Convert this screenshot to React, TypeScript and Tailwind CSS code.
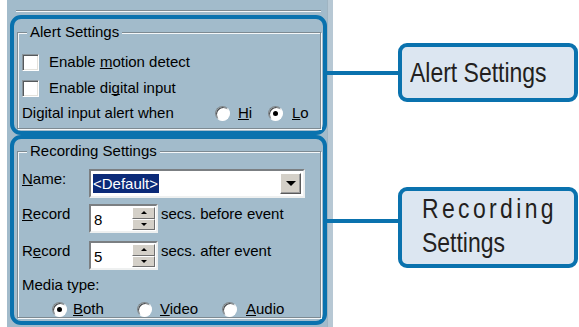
import React from 'react';

const ui = { fontFamily: '"Liberation Sans", Arial, sans-serif' };

function CheckBox() {
  return (
    <span className="w-[17px] h-[17px] bg-white border border-t-[#8a949a] border-l-[#8a949a] border-r-white border-b-white shadow-[inset_1px_1px_0_#55595c,inset_-1px_-1px_0_#e4e2dc] shrink-0" />
  );
}

function Radio({ on }: { on?: boolean }) {
  return (
    <span className="relative w-[15px] h-[15px] rounded-full bg-white border border-t-[#7c8489] border-l-[#7c8489] border-r-white border-b-white shadow-[inset_1px_1px_0_#4a4d50] shrink-0 flex items-center justify-center">
      {on && <span className="w-[5px] h-[5px] rounded-full bg-black" />}
    </span>
  );
}

function K({ children }: { children: React.ReactNode }) {
  return <u className="[text-decoration-skip-ink:none]">{children}</u>;
}

function GroupBox({ title, className, children }: { title: string; className: string; children: React.ReactNode }) {
  return (
    <div className={`relative border border-[#7d8a92] shadow-[inset_1px_1px_0_#f4f7f9,1px_1px_0_#f4f7f9] ${className}`}>
      <span className="absolute -top-[10px] left-[9px] px-[3px] bg-[#a2bbcb] leading-[17px]">{title}</span>
      {children}
    </div>
  );
}

function Spin({ value }: { value: string }) {
  return (
    <div className="flex w-[69px] h-[29px] bg-white border-2 border-t-[#7b7f82] border-l-[#7b7f82] border-r-[#eef0f0] border-b-[#eef0f0]">
      <span className="flex-1 pl-[3px] pt-[4px] leading-[19px]">{value}</span>
      <div className="flex flex-col w-[23px] my-[1px] mr-[1px]">
        <span className="flex-1 bg-[#d4d0c8] border border-t-white border-l-white border-r-[#6f6f6f] border-b-[#6f6f6f] flex items-center justify-center">
          <span className="w-0 h-0 border-x-[3px] border-x-transparent border-b-[3px] border-b-black" />
        </span>
        <span className="flex-1 bg-[#d4d0c8] border border-t-white border-l-white border-r-[#6f6f6f] border-b-[#6f6f6f] flex items-center justify-center">
          <span className="w-0 h-0 border-x-[3px] border-x-transparent border-t-[3px] border-t-black" />
        </span>
      </div>
    </div>
  );
}

export default function App() {
  return (
    <div className="w-[579px] h-[327px] bg-white flex overflow-hidden text-[15px] text-black" style={ui}>
      <div className="ml-[7px] flex h-full">
        <div className="w-[320px] h-full bg-[#a2bbcb] flex flex-col">
          <div className="ml-[9px] w-[305px] h-[11px] border-b border-[#7d8a92] shadow-[0_1px_0_#f4f7f9]" />

          <div className="mt-[4px] ml-[3px] w-[317px] h-[120px] border-4 border-[#0a72ae] rounded-[11px]">
            <GroupBox title="Alert Settings" className="mt-[13px] ml-[3px] w-[304px] h-[97px]">
              <div className="flex flex-col pl-[4px] pt-[16px]">
                <div className="h-[26px] flex items-center gap-[10px]">
                  <CheckBox />
                  <span>Enable <K>m</K>otion detect</span>
                </div>
                <div className="h-[26px] flex items-center gap-[10px]">
                  <CheckBox />
                  <span>Enable di<K>g</K>ital input</span>
                </div>
                <div className="h-[24px] flex items-center">
                  <span className="w-[193px]">Digital input alert when</span>
                  <Radio />
                  <span className="ml-[8px] w-[30px]"><K>H</K>i</span>
                  <Radio on />
                  <span className="ml-[9px]"><K>L</K>o</span>
                </div>
              </div>
            </GroupBox>
          </div>

          <div className="ml-[3px] w-[317px] h-[190px] border-4 border-[#0a72ae] rounded-[11px]">
            <GroupBox title="Recording Settings" className="mt-[12px] ml-[3px] w-[304px] h-[167px]">
              <div className="flex flex-col pl-[4px] pt-[17px]">
                <div className="h-[29px] flex items-center">
                  <span className="w-[67px] -mt-[9px]"><K>N</K>ame:</span>
                  <div className="flex items-center w-[216px] h-[29px] bg-white border-2 border-t-[#7b7f82] border-l-[#7b7f82] border-r-[#eef0f0] border-b-[#eef0f0] pl-[2px] pr-[2px]">
                    <span className="bg-[#0b2a78] text-white h-[19px] leading-[19px] pr-[1px]">&lt;Default&gt;</span>
                    <span className="ml-auto w-[21px] h-[21px] bg-[#d4d0c8] border border-t-white border-l-white border-r-[#5a5a5a] border-b-[#5a5a5a] shadow-[inset_-1px_-1px_0_#9a9a9a] flex items-center justify-center">
                      <span className="w-0 h-0 border-x-[5px] border-x-transparent border-t-[5px] border-t-black" />
                    </span>
                  </div>
                </div>
                <div className="mt-[6px] h-[29px] flex items-center">
                  <span className="w-[67px] -mt-[8px]"><K>R</K>ecord</span>
                  <Spin value="8" />
                  <span className="ml-[3px] -mt-[9px]">secs. before event</span>
                </div>
                <div className="mt-[8px] h-[29px] flex items-center">
                  <span className="w-[67px] -mt-[9px]">R<K>e</K>cord</span>
                  <Spin value="5" />
                  <span className="ml-[3px] -mt-[9px]">secs. after event</span>
                </div>
                <div className="mt-[6px] h-[18px] flex items-center">Media type:</div>
                <div className="mt-[7px] h-[16px] flex items-center pl-[30px]">
                  <div className="w-[85px] flex items-center gap-[6px]">
                    <Radio on />
                    <span><K>B</K>oth</span>
                  </div>
                  <div className="w-[85px] flex items-center gap-[8px]">
                    <Radio />
                    <span><K>V</K>ideo</span>
                  </div>
                  <div className="flex items-center gap-[9px]">
                    <Radio />
                    <span><K>A</K>udio</span>
                  </div>
                </div>
              </div>
            </GroupBox>
          </div>
        </div>
        <div className="w-[6px] h-full bg-[#b7c8d4] border-l border-[#9fb4c2]" />
      </div>

      <div className="-ml-[6px] relative flex flex-col text-[#231f20]">
        <div className="mt-[43px] flex items-center">
          <span className="w-[71px] h-[4px] bg-[#0a72ae]" />
          <div className="w-[180px] h-[59px] bg-[#dce6f1] border-4 border-[#0a72ae] rounded-[9px] flex items-center pl-[8px] text-[28px] leading-[28px]">
            <span className="inline-block origin-left scale-x-[0.82] whitespace-nowrap">Alert Settings</span>
          </div>
        </div>
        <div className="mt-[85px] flex items-start">
          <span className="mt-[32px] w-[71px] h-[4px] bg-[#0a72ae]" />
          <div className="w-[180px] h-[81px] bg-[#dce6f1] border-4 border-[#0a72ae] rounded-[9px] pl-[20px] pt-[1px] text-[28px] leading-[34px]">
            <div className="origin-left scale-x-[0.82] whitespace-nowrap tracking-[4.1px]">Recording</div>
            <div className="origin-left scale-x-[0.82] whitespace-nowrap">Settings</div>
          </div>
        </div>
      </div>
    </div>
  );
}
